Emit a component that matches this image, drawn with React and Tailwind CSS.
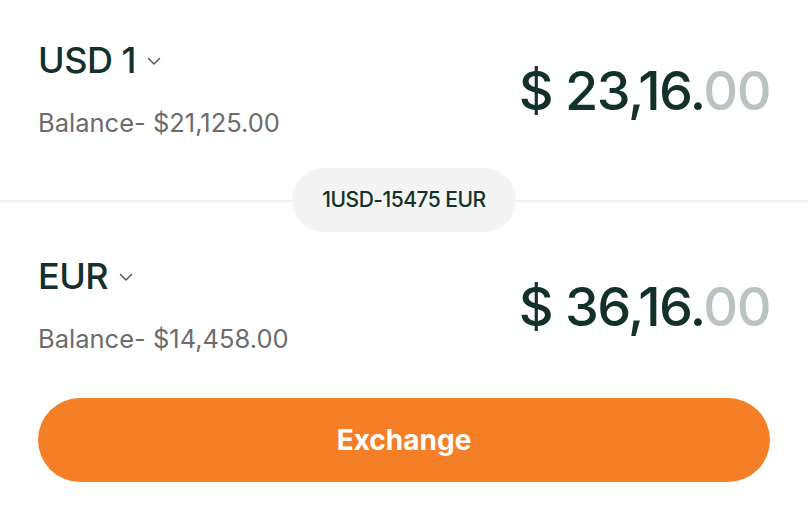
import React from "react";

function Chevron() {
  return (
    <svg width="14" height="14" viewBox="0 0 14 14" fill="none" className="mt-[2px]">
      <path d="M1.5 4.5L7 10L12.5 4.5" stroke="#5b5b5b" strokeWidth="1.5" strokeLinecap="round" strokeLinejoin="round" />
    </svg>
  );
}

function Row({ cur, balance, amount }) {
  return (
    <div className="flex items-center justify-between">
      <div className="flex flex-col">
        <div className="flex items-center gap-[11px]">
          <span className="text-[36px] leading-[42px] text-[#13302a] font-medium tracking-[-0.5px]">{cur}</span>
          <Chevron />
        </div>
        <span className="mt-[26px] text-[25.5px] leading-[32px] text-[#6c6c6c]">{balance}</span>
      </div>
      <div className="text-[54px] leading-[64px] font-medium text-[#13302a] tracking-[-1.5px] mt-[4px]">
        {amount}<span className="text-[#bac3bf]">00</span>
      </div>
    </div>
  );
}

export default function App() {
  return (
    <div className="w-[808px] h-[514px] bg-white overflow-hidden" style={{ fontFamily: "Inter, 'Noto Sans', sans-serif" }}>
      <div className="px-[38px] pt-[39px]">
        <Row cur="USD 1" balance="Balance- $21,125.00" amount="$ 23,16." />
      </div>
      <div className="relative mt-[29px] h-[64px] flex items-center justify-center">
        <div className="absolute left-0 right-0 top-1/2 h-[2px] bg-[#eeeeee]" />
        <div className="relative h-[64px] px-[30px] rounded-full bg-[#f4f4f4] flex items-center text-[21px] font-medium text-[#13302a] tracking-[-0.5px]">
          1USD-15475 EUR
        </div>
      </div>
      <div className="px-[38px] pt-[23px]">
        <Row cur="EUR" balance="Balance- $14,458.00" amount="$ 36,16." />
      </div>
      <div className="px-[38px] mt-[43px]">
        <button className="w-full h-[84px] rounded-full bg-[#f47f26] text-white text-[28px] font-bold">
          Exchange
        </button>
      </div>
    </div>
  );
}
